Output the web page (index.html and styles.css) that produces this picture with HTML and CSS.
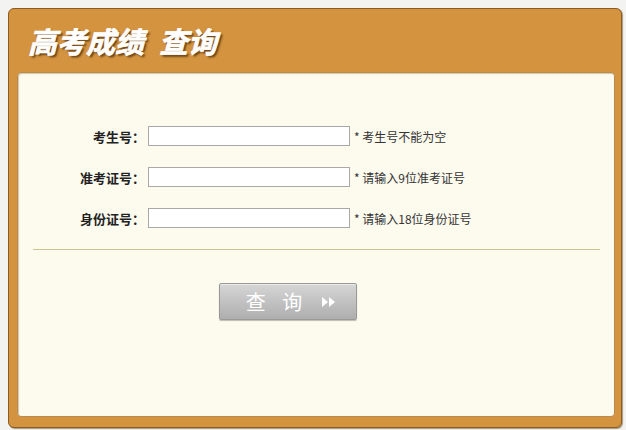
FILE: index.html
```html
<!DOCTYPE html>
<html lang="zh-CN">
<head>
  <meta charset="UTF-8" />
  <title>高考成绩查询</title>
  <link rel="stylesheet" href="styles.css">
</head>
<body>

  <div class="panel">
    <h1 class="panel-title"><span>高考成绩</span><span class="title-sub">查询</span></h1>

    <div class="panel-body">
      <form class="query-form" onsubmit="return false;">
        <div class="row">
          <label class="row-label" for="ksh">考生号：</label>
          <input class="row-input" type="text" id="ksh">
          <span class="row-hint">* 考生号不能为空</span>
        </div>
        <div class="row">
          <label class="row-label" for="zkzh">准考证号：</label>
          <input class="row-input" type="text" id="zkzh">
          <span class="row-hint">* 请输入9位准考证号</span>
        </div>
        <div class="row">
          <label class="row-label" for="sfzh">身份证号：</label>
          <input class="row-input" type="text" id="sfzh">
          <span class="row-hint">* 请输入18位身份证号</span>
        </div>

        <div class="divider"></div>

        <button class="query-btn" type="submit">
          <span class="btn-text">查&nbsp;询</span>
          <svg class="btn-arrows" width="14" height="10" viewBox="0 0 14 10">
            <polygon points="0,0 6,5 0,10" fill="#fff"/>
            <polygon points="7,0 13,5 7,10" fill="#fff"/>
          </svg>
        </button>
      </form>
    </div>
  </div>

</body>
</html>
```

FILE: styles.css
```css
* {
  box-sizing: border-box;
}

html, body {
  margin: 0;
  padding: 0;
}

body {
  background-color: #f3f3f1;
  font-family: "Noto Sans CJK SC", "Liberation Sans", sans-serif;
  color: #333;
  padding: 8px 4px 2px 8px;
}

.panel {
  width: 614px;
  height: 420px;
  background-color: #d4943f;
  border: 1px solid #8c5b1f;
  border-radius: 6px;
  padding: 0 6px 10px 8px;
  display: flex;
  flex-direction: column;
  box-shadow: 1px 1px 1px rgba(90, 60, 20, 0.5);
}

.panel-title {
  margin: 0;
  height: 63px;
  padding-left: 11px;
  line-height: 62px;
  font-size: 29px;
  font-weight: bold;
  font-style: italic;
  color: #fff;
  -webkit-text-stroke: 0.7px #fff;
  text-shadow: 2px 2px 2px rgba(70, 40, 10, 0.75);
}

.title-sub {
  margin-left: 15px;
}

.panel-body {
  flex: 1;
  background-color: #fdfaee;
  border: 1px solid #b88a4c;
  border-radius: 4px;
  box-shadow: inset 1px 1px 1px rgba(140, 100, 50, 0.35);
}

.query-form {
  padding-top: 53px;
}

.row {
  display: flex;
  align-items: center;
  height: 20px;
  margin-bottom: 21px;
}

.row:last-of-type {
  margin-bottom: 0;
}

.row-label {
  width: 127px;
  text-align: right;
  font-size: 13px;
  font-weight: bold;
  color: #222;
  margin-right: 3px;
}

.row-input {
  width: 202px;
  height: 20px;
  border: 1px solid #a9a9a9;
  background: #fff;
  margin: 0 4px 0 0;
  padding: 0 3px;
}

.row-hint {
  font-size: 12px;
  color: #333;
}

.divider {
  height: 1px;
  background-color: #cdc391;
  margin: 16px 14px 0 15px;
}

.query-btn {
  margin: 33px 0 0 201px;
  width: 138px;
  height: 37px;
  border: 1px solid #999;
  border-radius: 2px;
  background: linear-gradient(to bottom, #d6d6d6, #aeaeae);
  box-shadow: 0 1px 1px rgba(0, 0, 0, 0.25), inset 0 1px 0 rgba(255, 255, 255, 0.5);
  display: flex;
  align-items: center;
  justify-content: center;
  gap: 18px;
  padding: 0 0 0 6px;
  cursor: pointer;
}

.btn-text {
  font-family: "Noto Sans CJK SC", sans-serif;
  font-size: 20px;
  color: #fff;
  letter-spacing: 2px;
  word-spacing: 8px;
}

.btn-arrows {
  display: block;
}
```
